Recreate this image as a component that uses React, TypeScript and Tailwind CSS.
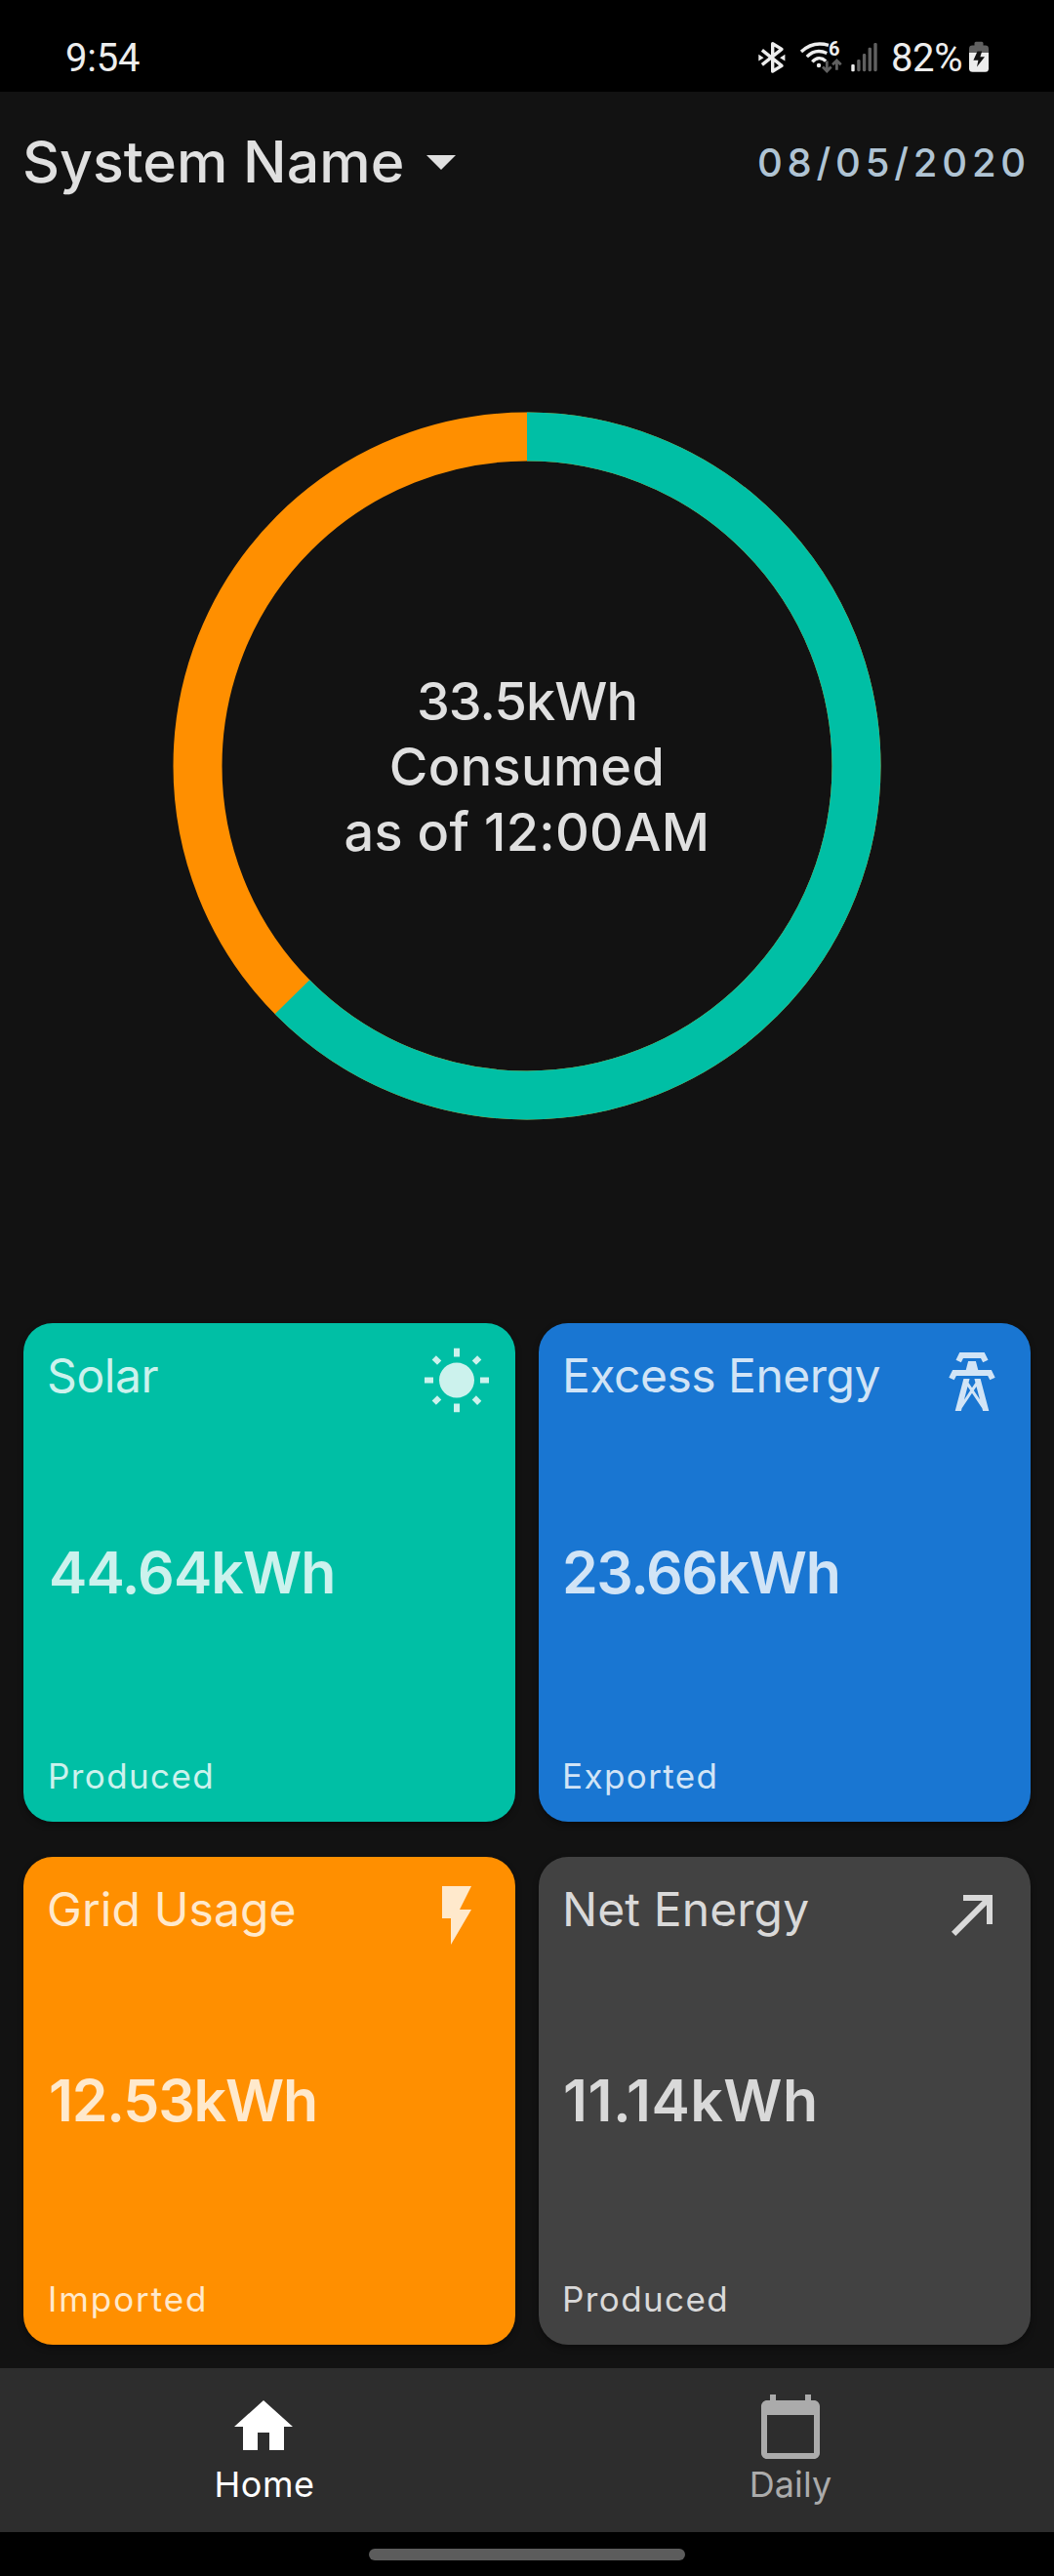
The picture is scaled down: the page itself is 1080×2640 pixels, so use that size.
import type { ReactNode } from "react";

const TEAL = "#00BFA5";
const ORANGE = "#FF8F00";

function BluetoothIcon() {
  return (
    <svg width="30" height="34" viewBox="776 42 30 34" fill="none">
      <path
        d="M780.9 51.4L801 67.4L791.7 73V44.8L801 50.4L780.9 66.4"
        stroke="#EDEDED"
        strokeWidth="3.4"
        strokeLinejoin="round"
      />
      <path d="M777.3 55.8L782.6 59.2L777.3 62.6ZM804.4 55.8L799.1 59.2L804.4 62.6Z" fill="#EDEDED" />
    </svg>
  );
}

function WifiIcon() {
  return (
    <span className="relative ml-[13px] block h-[34px] w-[44px]">
      <svg width="44" height="34" viewBox="819 42 44 34" fill="none">
        <g stroke="#EDEDED" strokeWidth="3.3">
          <path d="M821 53C829 45.5 839 43.4 849 46.4" />
          <path d="M826.8 58.2C832.5 52.2 839.5 51 847.3 54.4" />
          <path d="M832.3 63.4C836.5 58.6 841.8 58.4 846.2 62.6" />
        </g>
        <circle cx="839" cy="67" r="2.2" fill="#EDEDED" />
        <g stroke="#606060" strokeWidth="2.8">
          <path d="M847.3 62.6V73M843 68.6L847.3 72.9L851.6 68.6" />
          <path d="M857.4 71.8V62M853.1 66.2L857.4 61.9L861.7 66.2" />
        </g>
      </svg>
      <span className="absolute top-[-1px] left-[30px] font-['Roboto',sans-serif] text-[20px] leading-[19px] font-bold text-[#EDEDED]">
        6
      </span>
    </span>
  );
}

function SignalIcon() {
  return (
    <svg className="ml-[9px]" width="27" height="34" viewBox="872 42 27 34">
      <rect x="872.3" y="66" width="3.4" height="7.2" rx="1" fill="#EDEDED" />
      <g fill="#606060">
        <rect x="878.2" y="61" width="3.4" height="12.2" rx="1.4" />
        <rect x="883.9" y="55" width="3.4" height="18.2" rx="1.4" />
        <rect x="889.6" y="48.7" width="3.4" height="24.5" rx="1.4" />
        <rect x="895.3" y="44" width="3.4" height="29.2" rx="1.4" />
      </g>
    </svg>
  );
}

function BatteryIcon() {
  return (
    <svg className="ml-[5px]" width="20" height="34" viewBox="993 42 20 34">
      <path
        d="M998.5 46.6V44.2Q998.5 42.7 1000 42.7H1006Q1007.5 42.7 1007.5 44.2V46.6H1009.5Q1013 46.6 1013 50V54H993V50Q993 46.6 996.5 46.6Z"
        fill="#606060"
      />
      <path d="M993 54H1013V70.2Q1013 73.7 1009.5 73.7H996.5Q993 73.7 993 70.2Z" fill="#EDEDED" />
      <path d="M1001.6 52.4H1006.2L1004.4 58.2H1009L1001 68.4L1002.4 61.8H997.4Z" fill="#111" />
    </svg>
  );
}

function StatusBar() {
  return (
    <div className="flex h-[94px] items-center justify-between bg-black pt-6 pr-[67px] pl-[67px] font-['Roboto',sans-serif] text-[40px] leading-[46px] text-[#EDEDED]">
      <span className="pt-[2px] tracking-[-0.2px]">9:54</span>
      <div className="flex items-center">
        <BluetoothIcon />
        <WifiIcon />
        <SignalIcon />
        <span className="ml-[14px] w-[75px] pt-[2px] tracking-[-0.4px]">82%</span>
        <BatteryIcon />
      </div>
    </div>
  );
}

function Header() {
  return (
    <header className="flex h-[142px] items-center justify-between pr-[24px] pl-[23px] font-medium">
      <div className="flex items-center text-[#E0E0E0]">
        <h1 className="w-[393px] pt-px text-[59px] leading-[72px] whitespace-nowrap">System Name</h1>
        <svg width="72" height="72" viewBox="0 0 24 24" fill="currentColor">
          <path d="M7 10l5 5 5-5z" />
        </svg>
      </div>
      <time className="pt-[3px] text-[40px] leading-[48px] tracking-[4.8px] text-[#B0C4D4]">08/05/2020</time>
    </header>
  );
}

function Donut() {
  const r = 337.5;
  const c = 2 * Math.PI * r;
  const solar = 0.626;
  return (
    <section className="grid h-[1098px] place-items-center">
      <svg className="col-start-1 row-start-1" width="726" height="726" viewBox="-363 -363 726 726" fill="none">
        <circle r={r} stroke={ORANGE} strokeWidth="50" />
        <circle
          r={r}
          stroke={TEAL}
          strokeWidth="50"
          strokeDasharray={`${c * solar} ${c}`}
          transform="rotate(-90)"
        />
      </svg>
      <div className="col-start-1 row-start-1 text-center text-[54px] leading-[67px] font-medium text-[#E0E0E0]">
        <p className="tracking-[-0.9px]">33.5kWh</p>
        <p className="tracking-[0.4px]">Consumed</p>
        <p className="tracking-[0.3px]">as of 12:00AM</p>
      </div>
    </section>
  );
}

type CardProps = {
  title: string;
  value: string;
  note: string;
  className: string;
  titleClass: string;
  valueClass: string;
  noteClass: string;
  icon: ReactNode;
};

function Card({ title, value, note, className, titleClass, valueClass, noteClass, icon }: CardProps) {
  return (
    <article
      className={`grid grid-rows-[minmax(0,1fr)_auto_minmax(0,1fr)] rounded-[30px] p-6 shadow-[0_3px_6px_rgba(0,0,0,0.35)] ${className}`}
    >
      <div className="flex items-start justify-between">
        <h2 className={`text-[48px] leading-[60px] whitespace-nowrap ${titleClass}`}>{title}</h2>
        <svg width="72" height="72" viewBox="0 0 24 24" fill="currentColor" className="shrink-0">
          {icon}
        </svg>
      </div>
      <p className={`text-[59px] leading-[72px] font-semibold ${valueClass}`}>{value}</p>
      <p className={`self-end text-[35px] leading-[46px] ${noteClass}`}>{note}</p>
    </article>
  );
}

function Cards() {
  return (
    <section className="mt-[22px] grid grid-cols-2 grid-rows-[511px_500px] gap-x-6 gap-y-9 px-6">
      <Card
        title="Solar"
        value="44.64kWh"
        note="Produced"
        className="bg-[#00BFA5] text-[#CCF2ED]"
        titleClass="tracking-[-0.4px]"
        valueClass="pl-[2px] tracking-[-0.9px]"
        noteClass="pl-px tracking-[1.4px]"
        icon={
          <path d="M6.76 4.84l-1.8-1.79-1.41 1.41 1.79 1.79 1.42-1.41zM4 10.5H1v2h3v-2zm9-9.95h-2V3.5h2V.55zm7.45 3.91l-1.41-1.41-1.79 1.79 1.41 1.41 1.79-1.79zm-3.21 13.7l1.79 1.8 1.41-1.41-1.8-1.79-1.4 1.4zM20 10.5v2h3v-2h-3zm-8-5c-3.31 0-6 2.69-6 6s2.69 6 6 6 6-2.69 6-6-2.69-6-6-6zm-1 16.95h2V19.5h-2v2.95zm-7.45-3.91l1.41 1.41 1.79-1.8-1.41-1.41-1.79 1.8z" />
        }
      />
      <Card
        title="Excess Energy"
        value="23.66kWh"
        note="Exported"
        className="bg-[#1976D2] text-[#D1E4F6]"
        titleClass="tracking-[-0.5px]"
        valueClass="tracking-[-1.4px]"
        noteClass="tracking-[1.4px]"
        icon={
          <path d="M8.28,5.45L6.5,4.55L7.76,2H16.23L17.5,4.55L15.72,5.44L15,4H9L8.28,5.45M18.62,8H14.09L13.3,5H10.7L9.91,8H5.38L4.1,10.55L5.89,11.44L6.62,10H17.38L18.1,11.45L19.89,10.56L18.62,8M17.77,22H15.7L15.46,21.1L12,15.9L8.53,21.1L8.3,22H6.23L9.12,11H11.19L10.83,12.35L12,14.1L13.16,12.35L12.81,11H14.88L17.77,22M11.4,15L10.5,13.65L9.32,18.13L11.4,15M14.68,18.12L13.5,13.64L12.6,15L14.68,18.12Z" />
        }
      />
      <Card
        title="Grid Usage"
        value="12.53kWh"
        note="Imported"
        className="bg-[#FF8F00] text-[#FFE9CC]"
        titleClass="tracking-[0.1px]"
        valueClass="pl-[2px] tracking-[-1.2px]"
        noteClass="pl-px tracking-[1.9px]"
        icon={<path d="M7 2v11h3v9l7-12h-4l4-8z" />}
      />
      <Card
        title="Net Energy"
        value="11.14kWh"
        note="Produced"
        className="bg-[#424242] text-[#D9D9D9]"
        titleClass="tracking-[0.1px]"
        valueClass="pl-px tracking-[0.5px]"
        noteClass="tracking-[1.4px]"
        icon={<path d="M5,17.59L15.59,7H9V5H19V15H17V8.41L6.41,19L5,17.59Z" />}
      />
    </section>
  );
}

function NavBar() {
  return (
    <nav className="mt-6 grid h-[168px] grid-cols-2 bg-[#2D2D2D] pt-6 text-[36px] leading-[46px]">
      <a className="flex flex-col items-center text-white">
        <svg width="72" height="72" viewBox="0 0 24 24" fill="currentColor">
          <path d="M10 20v-6h4v6h5v-8h3L12 3 2 12h3v8z" />
        </svg>
        <span className="pl-[2px] tracking-[0.5px]">Home</span>
      </a>
      <a className="flex flex-col items-center text-[#ABABAB]">
        <svg width="72" height="72" viewBox="0 0 24 24" fill="currentColor">
          <path d="M20 3h-1V1h-2v2H7V1H5v2H4c-1.1 0-2 .9-2 2v16c0 1.1.9 2 2 2h16c1.1 0 2-.9 2-2V5c0-1.1-.9-2-2-2zm0 18H4V8h16v13z" />
        </svg>
        <span className="tracking-[0.1px]">Daily</span>
      </a>
    </nav>
  );
}

export default function App() {
  return (
    <div className="flex h-[2640px] w-[1080px] flex-col overflow-hidden bg-[#121212] font-['Inter',sans-serif]">
      <StatusBar />
      <Header />
      <Donut />
      <Cards />
      <NavBar />
      <div className="flex h-[45px] justify-center bg-black pt-[17px]">
        <div className="h-3 w-[324px] rounded-full bg-[#5C5C5C]" />
      </div>
    </div>
  );
}
